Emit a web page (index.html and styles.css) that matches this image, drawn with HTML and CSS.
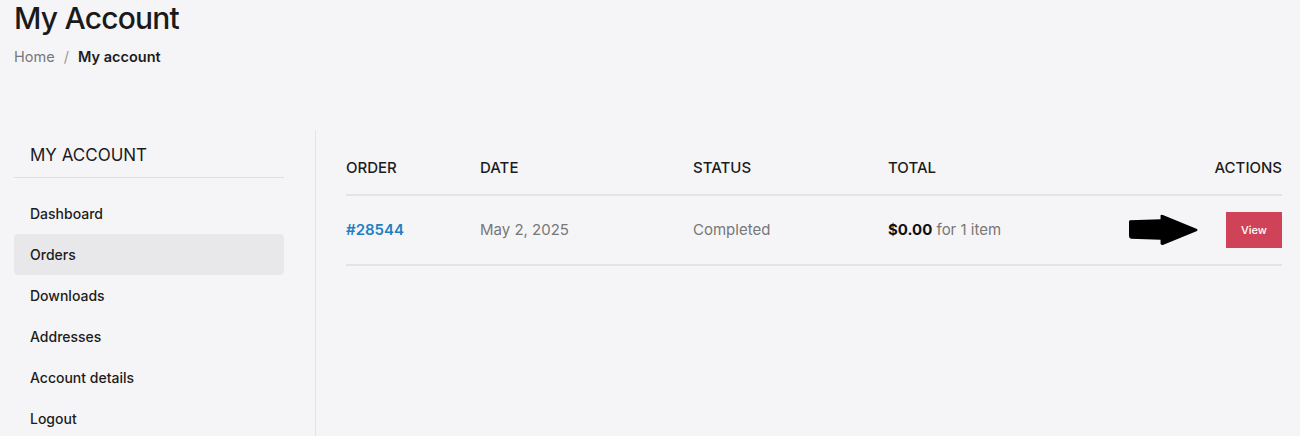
FILE: index.html
```html
<!DOCTYPE html>
<html lang="en">

<head>
    <meta charset="utf-8">
    <title>My Account</title>
    <link rel="stylesheet" href="styles.css">
</head>

<body>
    <div class="page-head">
        <h1>My Account</h1>
        <nav class="crumbs">
            <a href="#">Home</a>
            <span class="sep">/</span>
            <span class="current">My account</span>
        </nav>
    </div>

    <div class="account">
        <aside class="account-nav">
            <h2>MY ACCOUNT</h2>
            <ul>
                <li><a href="#">Dashboard</a></li>
                <li class="active"><a href="#">Orders</a></li>
                <li><a href="#">Downloads</a></li>
                <li><a href="#">Addresses</a></li>
                <li><a href="#">Account details</a></li>
                <li><a href="#">Logout</a></li>
            </ul>
        </aside>

        <main class="account-content">
            <table class="orders">
                <thead>
                    <tr>
                        <th class="col-order">Order</th>
                        <th class="col-date">Date</th>
                        <th class="col-status">Status</th>
                        <th class="col-total">Total</th>
                        <th class="col-actions">Actions</th>
                    </tr>
                </thead>
                <tbody>
                    <tr>
                        <td><a class="order-link" href="#">#28544</a></td>
                        <td class="muted">May 2, 2025</td>
                        <td class="muted">Completed</td>
                        <td><strong>$0.00</strong> <span class="muted">for 1 item</span></td>
                        <td class="col-actions">
                            <span class="action-wrap">
                                <svg class="pointer" viewBox="0 0 70 32" xmlns="http://www.w3.org/2000/svg">
                                    <path d="M1 6 L32 5 L32 1 Q33 0 35 1 L69 15 Q70 16 69 17 L35 31 Q33 32 32 30 L32 26 L2 25 Q0 24 0 22 L0 8 Q0 6 1 6 Z" fill="#000" />
                                </svg>
                                <a class="btn-view" href="#">View</a>
                            </span>
                        </td>
                    </tr>
                </tbody>
            </table>
        </main>
    </div>
</body>

</html>
```

FILE: styles.css
```css
body {
    margin: 0;
    background-color: #f5f5f7;
    color: #1c1c1c;
    font-family: "Inter", "Liberation Sans", sans-serif;
}

a {
    color: inherit;
    text-decoration: none;
}

.page-head {
    padding: 0 14px;
}

.page-head h1 {
    margin: 0;
    padding-top: 1px;
    font-size: 30px;
    font-weight: 500;
    line-height: 34px;
    letter-spacing: -0.8px;
    color: #1a1a1a;
}

.crumbs {
    margin-top: 12px;
    font-size: 14.5px;
    line-height: 20px;
}

.crumbs a {
    color: #777;
}

.crumbs .sep {
    color: #999;
    margin: 0 5px;
}

.crumbs .current {
    font-weight: 600;
    color: #1c1c1c;
}

.account {
    display: flex;
    margin-top: 63px;
    padding: 0 18px 0 14px;
}

.account-nav {
    width: 270px;
    flex-shrink: 0;
    padding-top: 15px;
}

.account-nav h2 {
    margin: 0;
    padding: 0 16px 12px;
    font-size: 17px;
    font-weight: 400;
    line-height: 20px;
    border-bottom: 1px solid #dedee0;
}

.account-nav ul {
    list-style: none;
    margin: 15px 0 0;
    padding: 0;
}

.account-nav li a {
    display: block;
    padding: 10px 16px;
    height: 21px;
    line-height: 21px;
    font-size: 14px;
    font-weight: 500;
    border-radius: 4px;
}

.account-nav li.active a {
    background-color: #e8e8ea;
}

.account-content {
    flex: 1;
    margin-left: 31px;
    padding-left: 30px;
    border-left: 1px solid #e4e4e6;
    min-height: 306px;
}

table.orders {
    width: 100%;
    border-collapse: collapse;
    margin-top: 15px;
}

.orders th {
    text-align: left;
    font-size: 15px;
    font-weight: 500;
    text-transform: uppercase;
    padding: 14px 0 17px;
    line-height: 18px;
    border-bottom: 2px solid #e4e4e6;
}

.orders td {
    font-size: 15px;
    padding: 0;
    height: 68px;
    line-height: 20px;
    border-bottom: 2px solid #e4e4e6;
}

.orders .col-order {
    width: 134px;
}

.orders .col-date {
    width: 213px;
}

.orders .col-status {
    width: 195px;
}

.orders .col-actions {
    text-align: right;
}

.order-link {
    color: #1f7fc0;
    font-weight: 600;
}

.muted {
    color: #777;
}

.orders strong {
    font-weight: 700;
    color: #111;
}

.action-wrap {
    position: relative;
    display: inline-block;
}

.pointer {
    position: absolute;
    right: 84px;
    top: 2px;
    width: 69px;
    height: 32px;
}

.btn-view {
    display: inline-block;
    width: 56px;
    height: 36px;
    line-height: 36px;
    text-align: center;
    background-color: #cf4257;
    color: #fff;
    font-size: 11px;
    font-weight: 500;
    vertical-align: middle;
}
```
